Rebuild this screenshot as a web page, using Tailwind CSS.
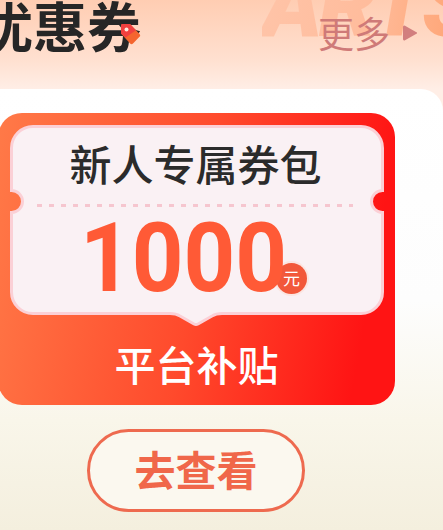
<!DOCTYPE html>
<html lang="zh">
<head>
  <meta charset="UTF-8">
  <title>优惠券</title>
  <script src="https://cdn.jsdelivr.net/npm/@tailwindcss/browser@4"></script>
</head>
<body class="w-[443px] h-[530px] overflow-hidden font-['Noto_Sans_CJK_SC','Noto_Sans',sans-serif] bg-[linear-gradient(180deg,#ffcdb2_0px,#ffe0d0_60px,#ffeee6_89px)]">
  <div class="relative w-[443px] h-[530px] overflow-hidden">
    <!-- faded letters behind the header -->
    <div class="absolute left-[262px] top-[-41px] text-[92px] leading-[92px] font-black italic font-['Roboto',sans-serif] tracking-[-4px] whitespace-nowrap bg-[linear-gradient(95deg,#ffc4a8_0%,#ffbc9c_50%,#ffae84_75%,#ffa070_100%)] bg-clip-text text-transparent">ARTS</div>

    <!-- header -->
    <header class="relative h-[89px] flex items-start justify-between">
      <div class="relative ml-[-21px] mt-[-10px] flex">
        <h1 class="text-[54px] leading-[70px] font-bold text-[#262626] whitespace-nowrap">优惠券</h1>
        <svg class="absolute left-[141px] top-[33px] w-[21px] h-[22px]" viewBox="0 0 21 22">
          <path d="M2 1h8l9.500 10a2 2 0 0 1 0 2.800l-6.500 6.800a2 2 0 0 1-2.900 0L1 10.500V2z" fill="#f4652f"/>
          <path d="M2 1h8l6 6.300L5.500 14.500 1 10.500V2z" fill="#f0403f"/>
          <circle cx="6.500" cy="6.500" r="2" fill="#fde9dc"/>
        </svg>
      </div>
      <div class="flex items-center mt-[13px] mr-[26px]">
        <span class="text-[36px] leading-[38px] text-[#cf7a78] whitespace-nowrap">更多</span>
        <svg class="ml-[13px] mt-[2px] w-[14px] h-[16px]" viewBox="0 0 14 16"><path d="M2 .800 13 7a1 1 0 0 1 0 2L2 15.200A1.300 1.300 0 0 1 0 14V2A1.300 1.300 0 0 1 2 .800z" fill="#d27f7f"/></svg>
      </div>
    </header>

    <!-- white card -->
    <main class="relative ml-[-20px] h-[441px] rounded-tr-[22px] pt-[24px] bg-[linear-gradient(180deg,#ffffff_0%,#fdfdfd_48%,#f9f6ea_75%,#f4efde_100%)]">
      <!-- ticket -->
      <section class="ml-[18px] w-[397px] h-[292px] rounded-[24px] pt-[12px] pl-[12px] bg-[linear-gradient(100deg,#ff7a48_0%,#ff4a2c_50%,#ff1414_90%)]">
        <div class="relative h-[190px] w-[374px]">
          <!-- inner coupon outline with side notches and bottom tail -->
          <svg class="absolute left-0 top-0 w-[374px] h-[205px]" viewBox="0 0 374 205">
            <path d="M23 1.500H351A21.500 21.500 0 0 1 372.500 23V65.500A11 11 0 0 0 372.500 87.500V167A21.500 21.500 0 0 1 351 188.500H212Q206 188.500 202 191L188 199Q186 200 184 199L170 191Q166 188.500 160 188.500H23A21.500 21.500 0 0 1 1.500 167V87.500A11 11 0 0 0 1.500 65.500V23A21.500 21.500 0 0 1 23 1.500Z" fill="#faf1f4" stroke="#fbd0d6" stroke-width="3"/>
          </svg>

          <div class="relative flex flex-col items-center">
            <h2 class="mt-[8px] mr-[3px] text-[42px] leading-[60px] font-medium text-[#2b2b2b] whitespace-nowrap">新人专属券包</h2>
            <div class="mt-[11px] w-[316px] h-[3px] mr-[4px] bg-[repeating-linear-gradient(90deg,#f6c6cf_0,#f6c6cf_5px,transparent_5px,transparent_12px)]"></div>
            <div class="flex items-end self-start mt-[3px] ml-[70px]">
              <span class="w-[203px] origin-left scale-x-[0.94] text-[96px] leading-[96px] font-bold font-['Roboto',sans-serif] text-[#ff5a36]">1000</span>
              <span class="mb-[12px] ml-[-7px] w-[31px] h-[31px] rounded-full bg-[#f2583a] text-white text-[17px] leading-[30px] text-center ring-2 ring-[#fbe6e2]">元</span>
            </div>
          </div>
        </div>
        <p class="mt-[22px] mr-[12px] text-center text-[41px] leading-[52px] font-medium text-white whitespace-nowrap">平台补贴</p>
      </section>

      <!-- button -->
      <div class="ml-[107px] mt-[24px] w-[218px] h-[83px] pb-[5px] rounded-full border-[3px] border-[#ee6a4f] bg-[#fbf8ef] flex items-center justify-center">
        <span class="text-[41px] leading-none font-bold text-[#f0674a] whitespace-nowrap">去查看</span>
      </div>
    </main>
  </div>
</body>
</html>
